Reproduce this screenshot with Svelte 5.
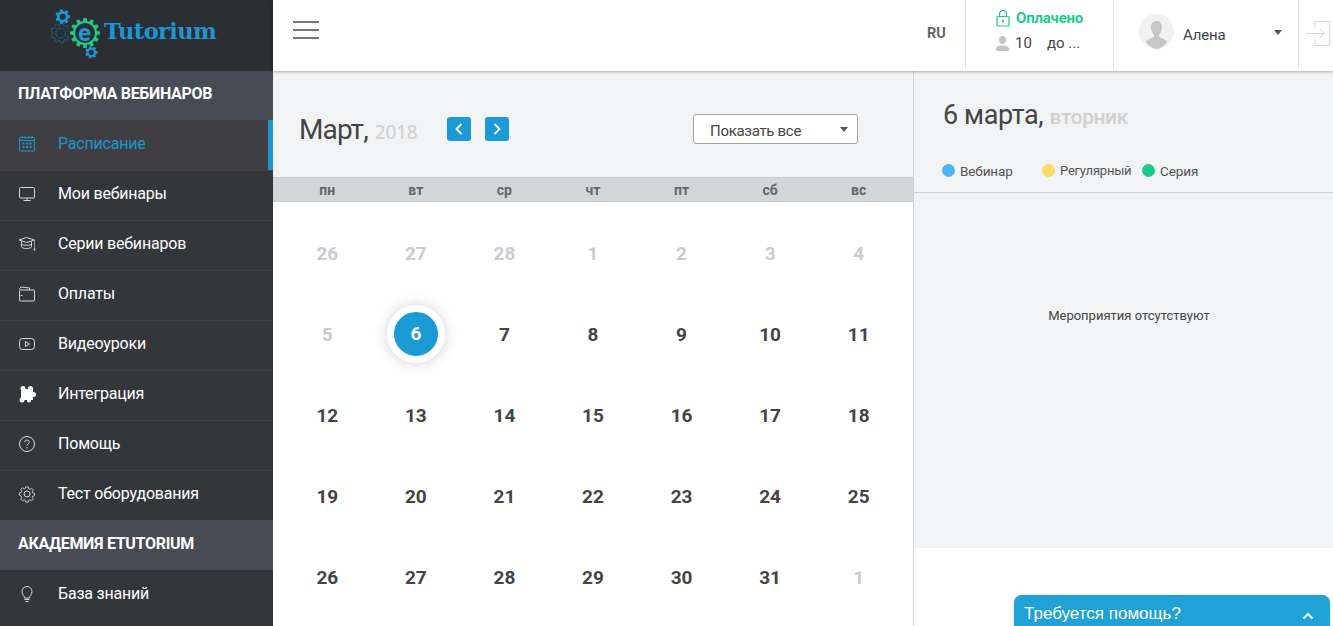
<script>
  const menuTop = [
    { label: 'Расписание', icon: 'calendar', active: true },
    { label: 'Мои вебинары', icon: 'monitor' },
    { label: 'Серии вебинаров', icon: 'cap' },
    { label: 'Оплаты', icon: 'wallet' },
    { label: 'Видеоуроки', icon: 'video' },
    { label: 'Интеграция', icon: 'puzzle' },
    { label: 'Помощь', icon: 'help' },
    { label: 'Тест оборудования', icon: 'gear' }
  ];
  const menuBottom = [{ label: 'База знаний', icon: 'bulb' }];
  const weekdays = ['пн', 'вт', 'ср', 'чт', 'пт', 'сб', 'вс'];

  // март 2018, хвосты соседних месяцев приглушены
  const days = [
    [26, 1], [27, 1], [28, 1], [1, 1], [2, 1], [3, 1], [4, 1],
    [5, 1], [6, 0], [7, 0], [8, 0], [9, 0], [10, 0], [11, 0],
    [12, 0], [13, 0], [14, 0], [15, 0], [16, 0], [17, 0], [18, 0],
    [19, 0], [20, 0], [21, 0], [22, 0], [23, 0], [24, 0], [25, 0],
    [26, 0], [27, 0], [28, 0], [29, 0], [30, 0], [31, 0], [1, 1]
  ];

  function gear(cx, cy, outer, inner, teeth) {
    const step = (Math.PI * 2) / teeth;
    let d = '';
    for (let i = 0; i < teeth; i++) {
      const a = i * step;
      const pts = [
        [inner, a - step * 0.32],
        [outer, a - step * 0.2],
        [outer, a + step * 0.2],
        [inner, a + step * 0.32]
      ];
      pts.forEach(([r, t], j) => {
        const x = (cx + r * Math.cos(t)).toFixed(2);
        const y = (cy + r * Math.sin(t)).toFixed(2);
        d += (i === 0 && j === 0 ? 'M' : 'L') + x + ' ' + y;
      });
    }
    return d + 'Z';
  }
</script>

{#snippet menuIcon(name)}
  <svg class="ico" viewBox="0 0 18 18" width="18" height="18" fill="none" stroke="currentColor" stroke-width="1">
    {#if name === 'calendar'}
      <rect x="1.5" y="2.5" width="15" height="13.5" rx="1" />
      <path d="M1.5 5.5h15M4 1v2.5M7 1v2.5M11 1v2.5M14 1v2.5" />
      <path d="M4.5 7.5h2v2h-2zM8 7.5h2v2H8zM11.5 7.5h2v2h-2zM4.5 11h2v2h-2zM8 11h2v2H8zM11.5 11h2v2h-2z" fill="currentColor" stroke="none" />
    {:else if name === 'monitor'}
      <rect x="1.5" y="2.5" width="15" height="10.5" rx="1" />
      <path d="M9 13v2.5M5.5 15.5h7" />
    {:else if name === 'cap'}
      <path d="M1 5 8.500 2.500 16.500 5 8.500 7.500z" />
      <path d="M3.500 6.500v5c0 1.300 2 2 5 2s5-.7 5-2v-5" />
      <path d="M3.500 9.500c1.500 1 8.500 1 10 0" />
      <path d="M16.500 5v9" stroke-width=".6" />
      <path d="M16.500 13.500v2" stroke-width="1.600" />
    {:else if name === 'wallet'}
      <path d="M1.500 5.500V15a1 1 0 0 0 1 1h13a1 1 0 0 0 1-1V6a1 1 0 0 0-1-1H3a1.500 1.500 0 0 1-1.500-1.500L3 2l8.500 1v2" />
      <path d="M2.500 10.500h2" />
    {:else if name === 'video'}
      <rect x="1.5" y="3.5" width="15" height="11" rx="3" />
      <path d="M7.5 6.500v5l4-2.500z" />
    {:else if name === 'puzzle'}
      <g fill="#fff" stroke="none">
        <rect x="3" y="4" width="12" height="11" />
        <circle cx="5" cy="3.500" r="2.500" />
        <circle cx="12.500" cy="3.500" r="2.500" />
        <circle cx="15.500" cy="9.500" r="2.500" />
        <circle cx="4" cy="15" r="2.500" />
        <circle cx="11" cy="15.500" r="2" />
        <circle cx="8.800" cy="2.300" r="1.200" fill="#33363b" />
        <circle cx="1.800" cy="9" r="1.300" fill="#33363b" />
      </g>
    {:else if name === 'help'}
      <circle cx="9" cy="9" r="7.500" />
      <path d="M6.800 7.200c0-1.300 1-2.100 2.200-2.100s2.200.8 2.200 2c0 1.700-2.200 1.700-2.200 3.400" />
      <path d="M9 12v1.300" />
    {:else if name === 'gear'}
      <path d="M7.600 1h2.800l.4 2.200 1.400.6 1.900-1.300 2 2-1.300 1.900.6 1.400 2.100.4v2.800l-2.100.4-.6 1.400 1.300 1.900-2 2-1.900-1.300-1.400.6-.4 2.100H7.600l-.4-2.100-1.400-.6-1.900 1.300-2-2 1.300-1.900-.6-1.400L.500 10.400V7.600l2.100-.4.6-1.400-1.300-1.900 2-2 1.900 1.300 1.400-.6z" transform="translate(1 1) scale(.89)" />
      <circle cx="9" cy="9" r="3" />
    {:else if name === 'bulb'}
      <path d="M6.500 13c0-2-2.500-3-2.500-6.500C4 3.500 6.300 1.500 9 1.500s5 2 5 5C14 10 11.500 11 11.500 13z" />
      <path d="M6.500 14.500h5M7.500 16.500h3" />
    {/if}
  </svg>
{/snippet}

<div class="page">
  <aside class="side">
    <div class="logo">
      <svg class="gears" width="56" height="58" viewBox="0 0 56 58">
        <path d={gear(10.700, 28, 10, 8, 9)} fill="none" stroke="#1d5f86" stroke-width="1" />
        <circle cx="10.700" cy="28" r="4.800" fill="none" stroke="#1d5f86" stroke-width="1" />
        <path d={gear(12.700, 11.700, 7.500, 5.700, 7)} fill="#1c97d4" />
        <circle cx="12.700" cy="11.700" r="3" fill="#2b2e33" />
        <circle cx="35" cy="28" r="16.500" fill="#2b2e33" />
        <path d={gear(35, 28, 15, 12, 12)} fill="#1fcb8b" />
        <circle cx="35" cy="28" r="10" fill="#2b2e33" />
        <text class="logo-e" x="34.500" y="35.500" text-anchor="middle">e</text>
        <path d={gear(41.300, 47.300, 6.300, 4.800, 7)} fill="#1c97d4" />
        <circle cx="41.300" cy="47.300" r="2.600" fill="#2b2e33" />
      </svg>
      <span class="logo-text">Tutorium</span>
    </div>

    <div class="section">ПЛАТФОРМА ВЕБИНАРОВ</div>
    {#each menuTop as item}
      <a class="item" class:active={item.active} href="#top">
        {@render menuIcon(item.icon)}
        <span>{item.label}</span>
      </a>
    {/each}
    <div class="section">АКАДЕМИЯ ETUTORIUM</div>
    {#each menuBottom as item}
      <a class="item" href="#top">
        {@render menuIcon(item.icon)}
        <span>{item.label}</span>
      </a>
    {/each}
  </aside>

  <div class="main">
    <header class="top">
      <button class="burger" aria-label="Меню"><i></i><i></i><i></i></button>
      <div class="lang">RU</div>
      <div class="plan">
        <div class="paid">
          <svg width="14" height="17" viewBox="0 0 14 17" fill="none" stroke="#1fcb8b" stroke-width="1.200">
            <rect x="1" y="6.500" width="12" height="9.500" rx="1" />
            <path d="M3.500 6.500V4a3.500 3.500 0 0 1 7 0v2.500" />
            <path d="M7 10v2.500" stroke-width="2" />
          </svg>
          <b>Оплачено</b>
        </div>
        <div class="limit">
          <svg width="13" height="15" viewBox="0 0 13 15" fill="#c4c4c4">
            <ellipse cx="6.500" cy="4" rx="3.500" ry="4" />
            <path d="M0 15v-2c0-2 2-3.500 6.500-3.500S13 11 13 13v2z" />
          </svg>
          <span class="num">10</span>
          <span>до ...</span>
        </div>
      </div>
      <div class="user">
        <div class="avatar">
          <svg width="35" height="35" viewBox="0 0 35 35">
            <circle cx="17.500" cy="17.500" r="17.500" fill="#f1f1f2" />
            <path d="M17.500 7c-3.500 0-5.500 2.500-5.500 6.500 0 3 1.200 5.500 3 7v2c-1.500 1.500-5 2-8.500 5A17.500 17.500 0 0 0 17.500 35a17.500 17.500 0 0 0 11-7.500c-3.500-3-7-3.500-8.500-5v-2c1.800-1.500 3-4 3-7C23 9.500 21 7 17.500 7z" fill="#c6c6c6" />
          </svg>
        </div>
        <span class="name">Алена</span>
        <span class="caret"></span>
      </div>
      <div class="logout">
        <svg width="24" height="25" viewBox="0 0 24 25" fill="none" stroke="#d6d6d6" stroke-width="1">
          <path d="M9 .5h14.500v24H9v-7M9 7.500V.5" />
          <path d="M0 12.500h18M13.500 7.500l5 5-5 5" />
        </svg>
      </div>
    </header>

    <div class="content">
      <section class="cal">
        <div class="cal-head">
          <h1>Март, <small>2018</small></h1>
          <button class="nav first" aria-label="Назад">
            <svg width="8" height="12" viewBox="0 0 8 12" fill="none" stroke="#fff" stroke-width="1.800"><path d="M6.500 1 1.500 6l5 5" /></svg>
          </button>
          <button class="nav" aria-label="Вперёд">
            <svg width="8" height="12" viewBox="0 0 8 12" fill="none" stroke="#fff" stroke-width="1.800"><path d="M1.500 1l5 5-5 5" /></svg>
          </button>
          <div class="select"><span>Показать все</span><span class="caret"></span></div>
        </div>
        <div class="weekdays">
          {#each weekdays as d}<span>{d}</span>{/each}
        </div>
        <div class="grid">
          {#each days as [n, muted], i}
            <div class="day" class:muted={muted === 1}>
              {#if i === 8}<span class="today">{n}</span>{:else}{n}{/if}
            </div>
          {/each}
        </div>
      </section>

      <section class="events">
        <div class="events-box">
          <h2>6 марта, <small>вторник</small></h2>
          <div class="legend">
            <span class="leg l1"><i style="background:#4ab5ee"></i>Вебинар</span>
            <span class="leg l2"><i style="background:#fed966"></i>Регулярный</span>
            <span class="leg l3"><i style="background:#1fcb8b"></i>Серия</span>
          </div>
          <div class="empty">Мероприятия отсутствуют</div>
        </div>
      </section>
    </div>
  </div>

  <div class="chat">
    <span>Требуется помощь?</span>
    <svg width="12" height="8" viewBox="0 0 12 8" fill="none" stroke="#fff" stroke-width="2.200"><path d="M1.500 6.500 6 2l4.500 4.500" /></svg>
  </div>
</div>

<style>
  :global(body) {
    margin: 0;
    background: #fff;
  }
  .page {
    position: relative;
    display: flex;
    height: 626px;
    overflow: hidden;
    font-family: Roboto, "Noto Sans", sans-serif;
    color: #444;
  }

  /* левая колонка */
  .side {
    width: 273px;
    flex: none;
    background: #33363b;
    color: #fff;
  }
  .logo {
    position: relative;
    height: 71px;
    background: #2b2e33;
    box-sizing: border-box;
    padding: 11px 0 0 104px;
  }
  .gears {
    position: absolute;
    left: 50px;
    top: 5px;
  }
  .logo-e {
    font: 700 24px Roboto, sans-serif;
    fill: #1c97d4;
  }
  .logo-text {
    font: 600 22.500px/40px "DejaVu Serif", serif;
    color: #1c97d4;
    letter-spacing: -0.6px;
  }
  .section {
    height: 50px;
    box-sizing: border-box;
    padding: 0 18px;
    background: #474b54;
    font-weight: 700;
    font-size: 16px;
    line-height: 47px;
    letter-spacing: -0.3px;
  }
  .logo + .section {
    height: 49px;
    line-height: 45px;
  }
  .item {
    display: flex;
    align-items: center;
    gap: 22px;
    height: 50px;
    box-sizing: border-box;
    padding: 0 0 4px 18px;
    border-top: 1px solid #3e4045;
    color: #fff;
    font-size: 16px;
    letter-spacing: -0.2px;
    text-decoration: none;
  }
  .section + .item {
    padding-bottom: 3px;
    border-top: none;
  }
  .item.active {
    background: #3f3e42;
    color: #1c97d4;
    border-right: 5px solid #1c97d4;
  }
  .ico {
    flex: none;
    overflow: visible;
    color: #d8d8d8;
  }
  .item.active .ico {
    color: #1c97d4;
  }

  /* шапка */
  .main {
    flex: 1;
    display: flex;
    flex-direction: column;
    min-width: 0;
  }
  .top {
    position: relative;
    z-index: 2;
    display: flex;
    height: 71px;
    flex: none;
    box-sizing: border-box;
    background: #fff;
    box-shadow: 0 1px 3px rgba(0, 0, 0, 0.3);
  }
  .burger {
    display: flex;
    flex-direction: column;
    gap: 6px;
    width: 26px;
    margin: 21px auto 0 20px;
    padding: 0;
    border: 0;
    background: none;
  }
  .burger i {
    display: block;
    height: 2px;
    background: #75787c;
  }
  .lang {
    width: 38px;
    padding-top: 25px;
    font-weight: 700;
    font-size: 14.500px;
    color: #666;
    box-sizing: border-box;
  }
  .plan,
  .user,
  .logout {
    height: 69px;
    box-sizing: border-box;
    border-left: 1px solid #e6e6e6;
  }
  .plan {
    width: 148px;
    padding: 9px 0 0 30px;
    font-size: 15px;
  }
  .paid {
    display: flex;
    align-items: center;
    gap: 6px;
    height: 18px;
  }
  .paid b {
    color: #1fcb8b;
    font-size: 15px;
    letter-spacing: -0.2px;
  }
  .limit {
    display: flex;
    align-items: center;
    height: 18px;
    margin-top: 7px;
    gap: 6px;
    color: #444;
  }
  .limit .num {
    width: 26px;
  }
  .user {
    position: relative;
    display: flex;
    align-items: flex-start;
    width: 185px;
    padding: 14px 0 0 25px;
  }
  .name {
    margin: 12px 0 0 9px;
    font-size: 15px;
    letter-spacing: -0.2px;
  }
  .user .caret {
    position: absolute;
    right: 16px;
    top: 30px;
  }
  .avatar {
    height: 35px;
  }
  .logout {
    width: 35px;
    padding: 21px 0 0 7px;
  }
  .caret {
    display: inline-block;
    width: 0;
    height: 0;
    border: 4px solid transparent;
    border-top: 5px solid #555;
    border-bottom: 0;
  }

  /* календарь */
  .content {
    flex: 1;
    display: flex;
    min-height: 0;
  }
  .cal {
    width: 641px;
    flex: none;
    box-sizing: border-box;
    border-right: 1px solid #d0d2d4;
  }
  .cal-head {
    display: flex;
    align-items: center;
    height: 106px;
    box-sizing: border-box;
    padding: 10px 55px 0 26px;
    background: #f2f3f5;
  }
  h1 {
    margin: 0;
    width: 136px;
    font-size: 28px;
    font-weight: 400;
    color: #444;
    letter-spacing: -0.9px;
  }
  h1 small {
    font: 19px "Noto Sans", sans-serif;
    color: #cfcfcf;
    margin-left: 1px;
    letter-spacing: -0.2px;
  }
  .nav {
    display: flex;
    align-items: center;
    justify-content: center;
    width: 24px;
    height: 24px;
    padding: 0;
    border: 0;
    border-radius: 3px;
    background: #1c9ad6;
  }
  .nav.first {
    margin-left: 12px;
    margin-right: 14px;
  }
  .select {
    display: flex;
    align-items: center;
    justify-content: space-between;
    width: 165px;
    height: 30px;
    box-sizing: border-box;
    margin-left: auto;
    padding: 0 9px 0 16px;
    background: #fff;
    border: 1px solid #a5a5a5;
    border-radius: 3px;
    font-size: 15px;
    letter-spacing: -0.3px;
  }
  .select span:first-child {
    padding-top: 3px;
  }
  .weekdays,
  .grid {
    display: grid;
    grid-template-columns: repeat(7, 1fr);
    padding: 0 10px;
  }
  .weekdays {
    height: 25px;
    background: #d2d6d9;
    border-top: 1px solid #c8cbce;
    border-bottom: 1px solid #c8cbce;
    box-sizing: border-box;
    align-items: center;
    justify-items: center;
    font-weight: 700;
    font-size: 14px;
    color: #666;
  }
  .grid {
    padding-top: 10px;
  }
  .day {
    display: flex;
    align-items: center;
    justify-content: center;
    height: 81px;
    box-sizing: border-box;
    padding-top: 2px;
    font-weight: 700;
    font-size: 19px;
    color: #444;
  }
  .day.muted {
    color: #c8ccd2;
  }
  .today {
    display: flex;
    align-items: center;
    justify-content: center;
    width: 44px;
    height: 44px;
    margin-top: -2px;
    border: 7px solid #fff;
    border-radius: 50%;
    background: #1c9ad6;
    color: #fff;
    box-shadow: 0 0 14px rgba(0, 0, 0, 0.18);
  }

  /* правая колонка */
  .events {
    flex: 1;
    min-width: 0;
  }
  .events-box {
    height: 477px;
    box-sizing: border-box;
    background: #f2f3f5;
    padding-top: 28px;
  }
  h2 {
    margin: 0 0 0 29px;
    font-size: 27px;
    font-weight: 400;
    color: #444;
    letter-spacing: -0.4px;
  }
  h2 small {
    font-size: 21px;
    font-weight: 500;
    color: #d0d0d0;
  }
  .legend {
    display: flex;
    height: 29px;
    margin-top: 33px;
    padding-left: 28px;
    box-sizing: border-box;
    border-bottom: 1px solid #d0d2d4;
    font-size: 13.500px;
    letter-spacing: -0.1px;
    color: #555;
  }
  .leg {
    display: flex;
    align-items: flex-start;
    line-height: 14px;
  }
  .leg i {
    width: 13px;
    height: 13px;
    border-radius: 50%;
    margin-right: 5px;
  }
  .l1 {
    width: 100px;
  }
  .l2 {
    width: 100px;
    font-size: 13px;
    letter-spacing: -0.2px;
  }
  .empty {
    margin: 115px 0 0 11px;
    text-align: center;
    font-size: 13px;
    color: #444;
  }

  /* виджет помощи поверх контента */
  .chat {
    position: absolute;
    left: 1014px;
    top: 595px;
    width: 316px;
    height: 40px;
    display: flex;
    justify-content: space-between;
    box-sizing: border-box;
    padding: 9px 16px 0 10px;
    background: #20a2d6;
    border-radius: 8px 8px 0 0;
    box-shadow: 0 0 2px rgba(0, 0, 0, 0.25);
    font: 17px/20px "Liberation Sans", sans-serif;
    color: #fff;
  }
  .chat svg {
    margin-top: 8px;
  }
</style>
